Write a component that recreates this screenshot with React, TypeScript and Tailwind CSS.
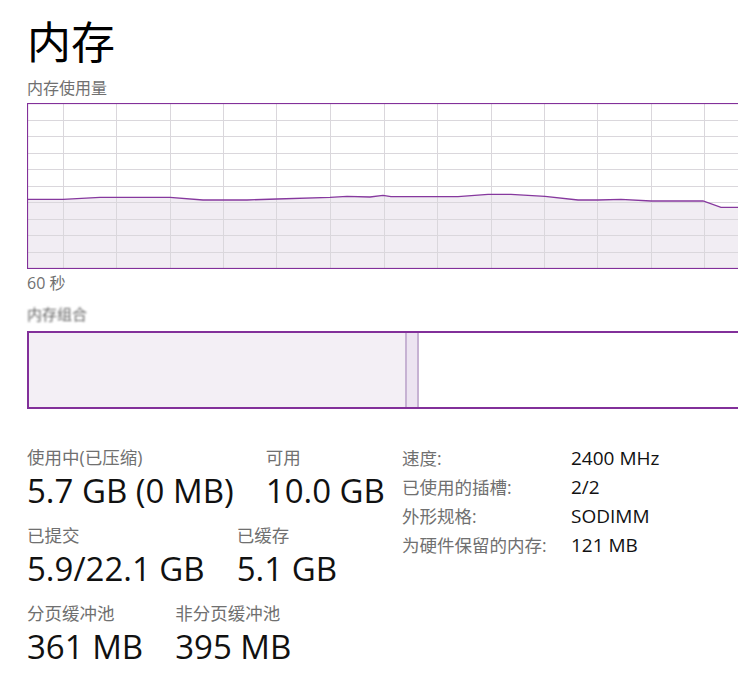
import React from "react";

const FONT = "font-['Open_Sans','Noto_Sans_CJK_SC',sans-serif]";

// memory usage trace, chart coords (box is 760 x 166)
const points: [number, number][] = [
  [0, 96.3], [36, 96.3], [73, 94.3], [143, 94.3], [176, 97], [220, 97],
  [250, 96], [303, 94.3], [320, 93.3], [343, 94], [356, 92.3], [364, 93.7],
  [431, 93.7], [461, 91.3], [484, 91.3], [518, 93.3], [551, 97], [571, 97],
  [594, 96.3], [624, 98], [676, 98], [694, 104.3], [760, 104.3],
];

const vLines = [36, 89, 143, 196, 249, 303, 357, 410, 464, 517, 570, 624, 677, 731];
const hLines = [17, 33, 50, 66, 83, 99, 116, 132, 149];

function UsageChart() {
  const line = points.map(([x, y]) => `${x},${y}`).join(" ");
  const area = `0,166 ${line} 760,166`;
  return (
    <svg width="760" height="166" viewBox="0 0 760 166" className="block">
      <polygon points={area} fill="#f1edf3" />
      {vLines.map((x) => (
        <line key={"v" + x} x1={x + 0.5} y1="0" x2={x + 0.5} y2="166" stroke="#dad7dc" strokeWidth="1" />
      ))}
      {hLines.map((y) => (
        <line key={"h" + y} x1="0" y1={y + 0.5} x2="760" y2={y + 0.5} stroke="#dad7dc" strokeWidth="1" />
      ))}
      <polyline points={line} fill="none" stroke="#86389e" strokeWidth="1.3" />
      <rect x="0.5" y="0.5" width="759" height="165" fill="none" stroke="#82309a" strokeWidth="1.2" />
    </svg>
  );
}

function Stat({ label, value }: { label: string; value: string }) {
  return (
    <div className="flex flex-col">
      <div className="text-[17.5px] leading-[22px] text-[#707070] whitespace-nowrap">{label}</div>
      <div className="text-[33px] leading-[46px] text-[#111] whitespace-nowrap">{value}</div>
    </div>
  );
}

const specs = [
  ["速度:", "2400 MHz"],
  ["已使用的插槽:", "2/2"],
  ["外形规格:", "SODIMM"],
  ["为硬件保留的内存:", "121 MB"],
];

export default function App() {
  return (
    <div className={`${FONT} w-[738px] h-[696px] overflow-hidden bg-white pl-[27px]`}>
      <h1 className="pt-[20px] text-[44px] leading-[44px] text-black font-normal">内存</h1>

      <div className="mt-[14px] text-[16px] leading-[20px] text-[#707070]">内存使用量</div>
      <div className="mt-[5px]">
        <UsageChart />
      </div>
      <div className="mt-[4px] text-[16px] leading-[20px] text-[#707070]">60 秒</div>

      <div className="mt-[11px] text-[15px] leading-[20px] text-[#5e5e5e] blur-[1px] w-fit">内存组合</div>
      <div className="mt-[7px] w-[760px] h-[78px] border-2 border-[#82309a] flex">
        <div className="w-[378px] h-full bg-[#f3eff5] border-r-2 border-[#c6b2d3]" />
        <div className="w-[12px] h-full bg-[#ece4f1] border-r-2 border-[#c6b2d3]" />
        <div className="flex-1 h-full bg-white" />
      </div>

      <div className="mt-[35px] flex">
        <div className="w-[375px] pt-[2px] flex flex-col gap-[10px]">
          <div className="flex gap-8">
            <Stat label="使用中(已压缩)" value="5.7 GB (0 MB)" />
            <Stat label="可用" value="10.0 GB" />
          </div>
          <div className="flex gap-8">
            <Stat label="已提交" value="5.9/22.1 GB" />
            <Stat label="已缓存" value="5.1 GB" />
          </div>
          <div className="flex gap-8">
            <Stat label="分页缓冲池" value="361 MB" />
            <Stat label="非分页缓冲池" value="395 MB" />
          </div>
        </div>

        <div className="flex flex-col">
          {specs.map(([k, v]) => (
            <div key={k} className="flex h-[29px] items-center">
              <div className="w-[169px] text-[17.5px] text-[#707070] whitespace-nowrap">{k}</div>
              <div className="text-[19px] text-[#111] whitespace-nowrap">{v}</div>
            </div>
          ))}
        </div>
      </div>
    </div>
  );
}
